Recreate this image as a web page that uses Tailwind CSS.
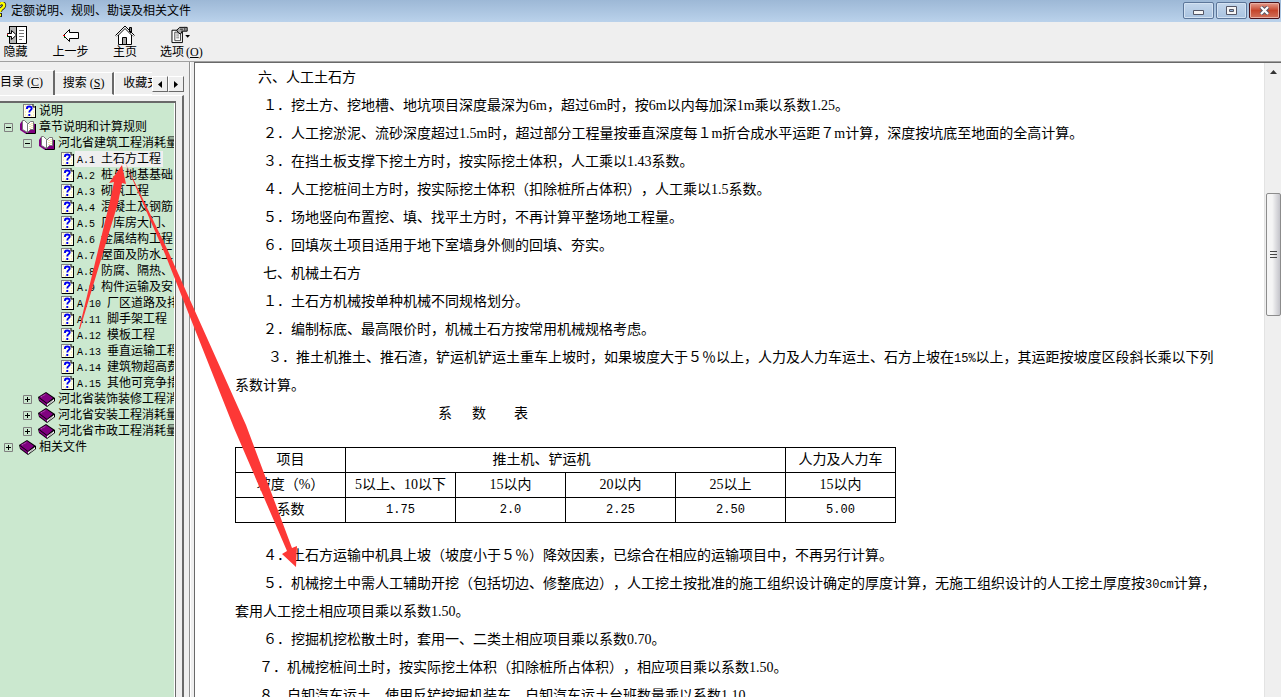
<!DOCTYPE html>
<html lang="zh-CN">
<head>
<meta charset="utf-8">
<title>定额说明、规则、勘误及相关文件</title>
<script src="https://cdn.jsdelivr.net/npm/@tailwindcss/browser@4"></script>
</head>
<body class="h-screen overflow-hidden bg-[#efefef] text-black font-['Liberation_Mono','Noto_Sans_CJK_SC',monospace] [text-spacing-trim:space-all]">
<svg width="0" height="0" class="absolute" aria-hidden="true">
  <symbol id="page" viewBox="0 0 13 14">
    <path d="M0 0h9l3 3v11H0z" fill="#808080"/><path d="M1 1h9l2 2v10H1z" fill="#fffff0"/>
    <path d="M10 0v3h3M12.500 2v12M1 13.500h12" stroke="#000" fill="none"/>
    <path d="M2 2h1M2 5h1M2 8h1M2 11h1M10 5h1M10 8h1M10 11h1M4 12h1M8 12h1" stroke="#f5e080"/>
    <path d="M4 5V4q0-1.500 2.300-1.500T8.700 4.300Q8.700 5.500 7.500 6.200T6.300 8.500M6.300 10v2" fill="none" stroke="#0000f0" stroke-width="1.900"/>
  </symbol>
  <symbol id="open" viewBox="0 0 16 14">
    <path d="M0 4l2-3h2l4 4 3-4h2v2l2 1v9l-1 1H6L0 10z" fill="#800080"/>
    <path d="M15.500 4v9.500H6" fill="none" stroke="#000"/>
    <path d="M2.500.500h2l3 3v9l-5-3z" fill="#fff" stroke="#777"/>
    <path d="M7.500 4.500l3-3h3v8h-3l-3 3z" fill="#fff" stroke="#777"/>
    <path d="M10 4v6M12 3v6" stroke="#e5d46a" stroke-dasharray="1 1"/>
  </symbol>
  <symbol id="closed" viewBox="0 0 17 15">
    <path d="M0 5l8-5 9 6v3l-8 6-8-6z" fill="#000"/>
    <path d="M1 5l7-4 7 5-6 5z" fill="#800080"/><path d="M1 6l8 6v2L1 8z" fill="#800080"/>
    <path d="M9 12l7-5v2l-7 5z" fill="#fff"/><path d="M3 5l5-3" stroke="#c080c0" stroke-dasharray="1 1"/>
    <path d="M10 12.500l5-4" stroke="#888" stroke-width=".6"/>
  </symbol>
  <symbol id="plus" viewBox="0 0 9 9"><path d="M.5.5h8v8h-8z" fill="none" stroke="#808080"/><path d="M2 4.500h5M4.500 2v5" stroke="#000"/></symbol>
  <symbol id="minus" viewBox="0 0 9 9"><path d="M.5.5h8v8h-8z" fill="none" stroke="#808080"/><path d="M2 4.500h5" stroke="#000"/></symbol>
</svg>

<div class="relative flex h-full flex-col">
  <header class="flex h-[22px] flex-none items-start bg-gradient-to-b from-[#9db8d6] to-[#bad2eb]">
    <svg class="mt-[2px] h-4 w-[11px]" viewBox="0 0 11 16" aria-hidden="true"><path d="M-1 3C1 0 5 1 4 4 3 7 0 6 0 10M-1 13h3" fill="none" stroke="#222" stroke-width="4"/><path d="M-1 3C1 0 5 1 4 4 3 7 0 6 0 10M-1 13h2" fill="none" stroke="#ff0" stroke-width="2.400"/></svg>
    <h1 class="flex-1 text-xs leading-6">定额说明、规则、勘误及相关文件</h1>
    <div class="mt-[2px] flex gap-[2px] pr-px">
      <button aria-label="最小化" class="flex h-[17px] w-[31px] items-center justify-center rounded-[2px] border border-[#5c7699] bg-gradient-to-b from-[#c3d6eb] to-[#a9c3e0] shadow-[inset_0_0_0_1px_#d3e2f2]"><svg class="mt-1 h-[5px] w-[11px]" viewBox="0 0 11 5"><path d="M.5.5h10v4H.5z" fill="#f5f5f5" stroke="#535666"/></svg></button>
      <button aria-label="最大化" class="flex h-[17px] w-[31px] items-center justify-center rounded-[2px] border border-[#5c7699] bg-gradient-to-b from-[#c3d6eb] to-[#a9c3e0] shadow-[inset_0_0_0_1px_#d3e2f2]"><svg class="h-[9px] w-[11px]" viewBox="0 0 11 9"><path d="M.5.5h10v8H.5zM3.500 3.500h4v2h-4z" fill="#f5f5f5" stroke="#535666"/><path d="M4 4h3v1H4z" fill="#8fb0d8"/></svg></button>
      <button aria-label="关闭" class="flex h-[17px] w-[31px] items-center justify-center rounded-[2px] border border-[#4a1118] bg-gradient-to-b from-[#e39b8c] via-[#c5452b] to-[#d0705a] shadow-[inset_0_0_0_1px_#e9b0a4]"><svg class="h-[9px] w-[11px]" viewBox="0 0 11 9"><path d="M2 1l7 7M9 1L2 8" stroke="#535666" stroke-width="4"/><path d="M2 1l7 7M9 1L2 8" stroke="#fff" stroke-width="2.200"/></svg></button>
    </div>
  </header>

  <nav class="flex h-[39px] flex-none text-xs leading-4">
    <button class="flex w-[31px] flex-col items-center pt-[3px]">
      <svg class="ml-[2px] h-5 w-5" viewBox="0 0 20 20" fill="none" stroke="#000"><path d="M2.500 1.500h17v17h-17z" fill="#fff"/><path d="M3 2h6v16H3z" fill="#b5b5b5" stroke="none"/><path d="M9.500 2v16M2 1.500h18" /><path d="M12 5.500h5M12 8.500h5M12 11.500h5M12 14.500h3" stroke="#777"/><path d="M.5 8.500h4v-3l5 4.500-5 4.500v-3h-4z" fill="#fff"/><path d="M0 9.500h1" stroke="#e00"/><path d="M0 11.500h1" stroke="#080"/></svg>
      <span>隐藏</span></button>
    <button class="ml-5 flex w-[39px] flex-col items-center pt-[3px]">
      <svg class="h-5 w-5" viewBox="0 0 20 20" fill="none" stroke="#000"><path d="M2.500 10.500l6-6v3h9v6h-9v3z" fill="#fff"/><path d="M2 10.500h2" stroke="#e00"/><path d="M3 12.500h1" stroke="#080"/></svg>
      <span class="whitespace-nowrap">上一步</span></button>
    <button class="ml-[18px] flex w-[34px] flex-col items-center pt-[3px]">
      <svg class="h-5 w-5" viewBox="0 0 20 20" fill="none" stroke="#000"><path d="M14.500 2.500h2v5h-2z" fill="#777"/><path d="M3.500 10v9.500h13V10L10 3.500z" fill="#fff"/><path d="M.5 10.500L10 1l9.500 9.500"/><path d="M1.500 11.500L10 3l8.500 8.500" stroke="#888"/><path d="M7.500 19v-6.500h4V19" fill="#aaa"/></svg>
      <span>主页</span></button>
    <button class="ml-[18px] flex flex-col items-center pt-[3px]">
      <svg class="h-5 w-5" viewBox="0 0 20 20" fill="none" stroke="#000"><path d="M.5 5.500h11v13H.5z" fill="#fff"/><path d="M3.500 7.500h6v9h-6z" stroke="#444"/><path d="M5 9.500h3M5 11.500h3M5 13.500h3" stroke="#777"/><path d="M5.500 5.500l3-3h8v4h-5l-2 3-2-1z" fill="#aaa"/><path d="M9 4.500h3M10 6.500h2M14 2v4" stroke="#333"/><path d="M14.500 10.500h5l-2.500 3z" fill="#000" stroke="none"/></svg>
      <span class="whitespace-nowrap">选项<span class="ml-[2px] font-['Liberation_Serif',serif]">(<u>O</u>)</span></span></button>
  </nav>

  <div class="flex min-h-0 flex-1 border-t border-[#a0a0a0]">
    <aside class="flex w-[190px] flex-none flex-col border-r border-[#909090] pt-2 pr-[5px]">
      <div class="flex h-[25px] flex-none items-end text-xs" role="tablist">
        <button role="tab" aria-selected="true" class="h-[25px] w-[55px] border-t border-r-2 border-t-white border-r-[#696969] pb-[2px] text-left whitespace-nowrap">目录<span class="ml-[3px] font-['Liberation_Serif',serif]">(<u>C</u>)</span></button>
        <button role="tab" class="h-[23px] w-[60px] border-t border-r-2 border-b border-t-white border-r-[#696969] border-b-white pl-2 text-left whitespace-nowrap">搜索<span class="ml-[3px] font-['Liberation_Serif',serif]">(<u>S</u>)</span></button>
        <button role="tab" class="h-[23px] w-[38px] overflow-hidden border-t border-b border-l border-white pl-2 text-left whitespace-nowrap">收藏夹</button>
        <button aria-label="向左" class="mb-[3px] flex h-4 w-4 items-center justify-center border border-t-white border-r-[#696969] border-b-[#696969] border-l-white"><svg class="h-[7px] w-1" viewBox="0 0 4 7"><path d="M4 0v7L0 3.500z"/></svg></button>
        <button aria-label="向右" class="mb-[3px] flex h-4 w-4 items-center justify-center border border-t-white border-r-[#696969] border-b-[#696969] border-l-white"><svg class="h-[7px] w-1" viewBox="0 0 4 7"><path d="M0 0v7l4-3.500z"/></svg></button>
      </div>
      <div class="min-h-0 flex-1 border-t border-r-2 border-t-white border-r-[#696969] pt-[5px] pr-[6px]">
        <div class="h-full overflow-hidden border-t-2 border-r border-t-[#696969] border-r-[#696969] bg-white pr-px">
          <div class="h-full bg-[#cbe8cf]">
            <ul id="tree" class="overflow-hidden text-[10px] leading-[18px] whitespace-nowrap"></ul>
          </div>
        </div>
      </div>
    </aside>
    <div class="w-1 flex-none border-l border-white"></div>

    <main class="flex min-w-0 flex-1 border-t border-l border-[#696969] bg-white">
      <article class="min-w-0 flex-1 overflow-hidden pt-px pr-11 pl-10 text-sm leading-7 font-['Liberation_Serif','Noto_Sans_CJK_SC',serif]">
        <p class="indent-[23px]">六、人工土石方</p>
        <p class="indent-7">１．挖土方、挖地槽、地坑项目深度最深为6m，超过6m时，按6m以内每加深1m乘以系数1.25。</p>
        <p class="indent-7">２．人工挖淤泥、流砂深度超过1.5m时，超过部分工程量按垂直深度每１m折合成水平运距７m计算，深度按坑底至地面的全高计算。</p>
        <p class="indent-7">３．在挡土板支撑下挖土方时，按实际挖土体积，人工乘以1.43系数。</p>
        <p class="indent-7">４．人工挖桩间土方时，按实际挖土体积（扣除桩所占体积），人工乘以1.5系数。</p>
        <p class="indent-7">５．场地竖向布置挖、填、找平土方时，不再计算平整场地工程量。</p>
        <p class="indent-7">６．回填灰土项目适用于地下室墙身外侧的回填、夯实。</p>
        <p class="indent-7">七、机械土石方</p>
        <p class="indent-7">１．土石方机械按单种机械不同规格划分。</p>
        <p class="indent-7">２．编制标底、最高限价时，机械土石方按常用机械规格考虑。</p>
        <p class="indent-[33px]">３．推土机推土、推石渣，铲运机铲运土重车上坡时，如果坡度大于５％以上，人力及人力车运土、石方上坡在<span class="font-['Liberation_Mono',monospace] text-xs leading-4">15%</span>以上，其运距按坡度区段斜长乘以下列系数计算。</p>
        <p class="flex gap-5 pl-[203px]"><span>系</span><span>数</span><span class="pl-2">表</span></p>
        <table class="mt-[19px] w-[661px] table-fixed border-collapse text-center leading-6 [&_td]:border [&_td]:border-black [&_td]:p-0 [&_th]:border [&_th]:border-black [&_th]:font-normal">
          <tr><th class="p-0">项目</th><th colspan="4" class="py-0 pr-12 pl-0">推土机、铲运机</th><th class="p-0">人力及人力车</th></tr>
          <tr><th class="p-0">坡度（%）</th><td class="whitespace-nowrap">5以上、10以下</td><td>15以内</td><td>20以内</td><td>25以上</td><td>15以内</td></tr>
          <tr class="font-['Liberation_Mono','Noto_Sans_CJK_SC',monospace] text-xs leading-6"><th class="p-0 text-sm leading-6">系数</th><td>1.75</td><td>2.0</td><td>2.25</td><td>2.50</td><td>5.00</td></tr>
        </table>
        <p class="mt-[19px] indent-7">４．土石方运输中机具上坡（坡度小于５％）降效因素，已综合在相应的运输项目中，不再另行计算。</p>
        <p class="indent-7">５．机械挖土中需人工辅助开挖（包括切边、修整底边），人工挖土按批准的施工组织设计确定的厚度计算，无施工组织设计的人工挖土厚度按<span class="font-['Liberation_Mono',monospace] text-xs leading-4">30cm</span>计算，套用人工挖土相应项目乘以系数1.50。</p>
        <p class="indent-7">６．挖掘机挖松散土时，套用一、二类土相应项目乘以系数0.70。</p>
        <p class="indent-6">７．机械挖桩间土时，按实际挖土体积（扣除桩所占体积），相应项目乘以系数1.50。</p>
        <p class="indent-6">８．自卸汽车运土，使用反铲挖掘机装车，自卸汽车运土台班数量乘以系数1.10。</p>
      </article>
      <div class="flex w-[17px] flex-none flex-col items-center border-l border-[#e3e3e3] bg-[#efefef]">
        <svg class="mt-[7px] h-1 w-[7px]" viewBox="0 0 7 4"><path d="M0 4h7L3.500 0z" fill="#333"/></svg>
        <div class="mt-[119px] flex h-[123px] w-[15px] flex-none flex-col items-center justify-center gap-[2px] rounded-[2px] border border-[#8c8c8c] bg-gradient-to-r from-[#f5f5f5] from-40% to-[#c4c4ca]">
          <i class="h-px w-[7px] bg-[#444]"></i><i class="h-px w-[7px] bg-[#444]"></i><i class="h-px w-[7px] bg-[#444]"></i>
        </div>
      </div>
    </main>
  </div>

  <svg class="pointer-events-none absolute top-0 left-0 h-[580px] w-80" viewBox="0 0 320 580" fill="#fd3836" aria-hidden="true">
    <path d="M79 329L110 201 114 182 109 183 122 165 126 184 122 183 118 203 80 329z"/>
    <path d="M124 160L169 253 246 425 292 548 297 546 296 567 282 554 287 551 234 428 165 254z"/>
  </svg>
</div>

<script>
const rows = [
  [0, 'page', '说明'], [0, 'open', '章节说明和计算规则', 'minus'], [1, 'open', '河北省建筑工程消耗量', 'minus'],
  ...['A.1 土石方工程', 'A.2 桩与地基基础', 'A.3 砌筑工程', 'A.4 混凝土及钢筋', 'A.5 厂库房大门、', 'A.6 金属结构工程',
    'A.7 屋面及防水工', 'A.8 防腐、隔热、', 'A.9 构件运输及安', 'A.10 厂区道路及排', 'A.11 脚手架工程', 'A.12 模板工程',
    'A.13 垂直运输工程', 'A.14 建筑物超高费', 'A.15 其他可竞争措'].map(t => [2, 'page', t]),
  [1, 'closed', '河北省装饰装修工程消', 'plus'], [1, 'closed', '河北省安装工程消耗量', 'plus'],
  [1, 'closed', '河北省市政工程消耗量', 'plus'], [0, 'closed', '相关文件', 'plus']
];
const pads = ['pl-1', 'pl-[23px]', 'pl-[42px]'];
document.getElementById('tree').innerHTML = rows.map(([lvl, icon, text, exp], i) => {
  const toggle = exp ? `<button aria-label="展开或折叠" class="h-[9px] w-[9px] flex-none"><svg class="block h-[9px] w-[9px]"><use href="#${exp}"/></svg></button>` : '<span class="w-[9px] flex-none"></span>';
  const size = icon === 'page' ? 'ml-1 h-[14px] w-[13px]' : icon === 'open' ? 'ml-px h-[14px] w-4' : 'h-[15px] w-[17px]';
  const label = text.replace(/[^\x00-\x7f]+/g, s => `<span class="text-xs leading-[18px]">${s}</span>`);
  return `<li class="flex h-4 items-center ${pads[lvl]}">${toggle}<span class="ml-[6px] flex w-[18px] flex-none"><svg class="${size}"><use href="#${icon}"/></svg></span><a href="#" class="h-4 whitespace-pre px-[2px] ${i === 3 ? 'bg-[#efefef]' : ''}">${label}</a></li>`;
}).join('');
</script>
</body>
</html>
